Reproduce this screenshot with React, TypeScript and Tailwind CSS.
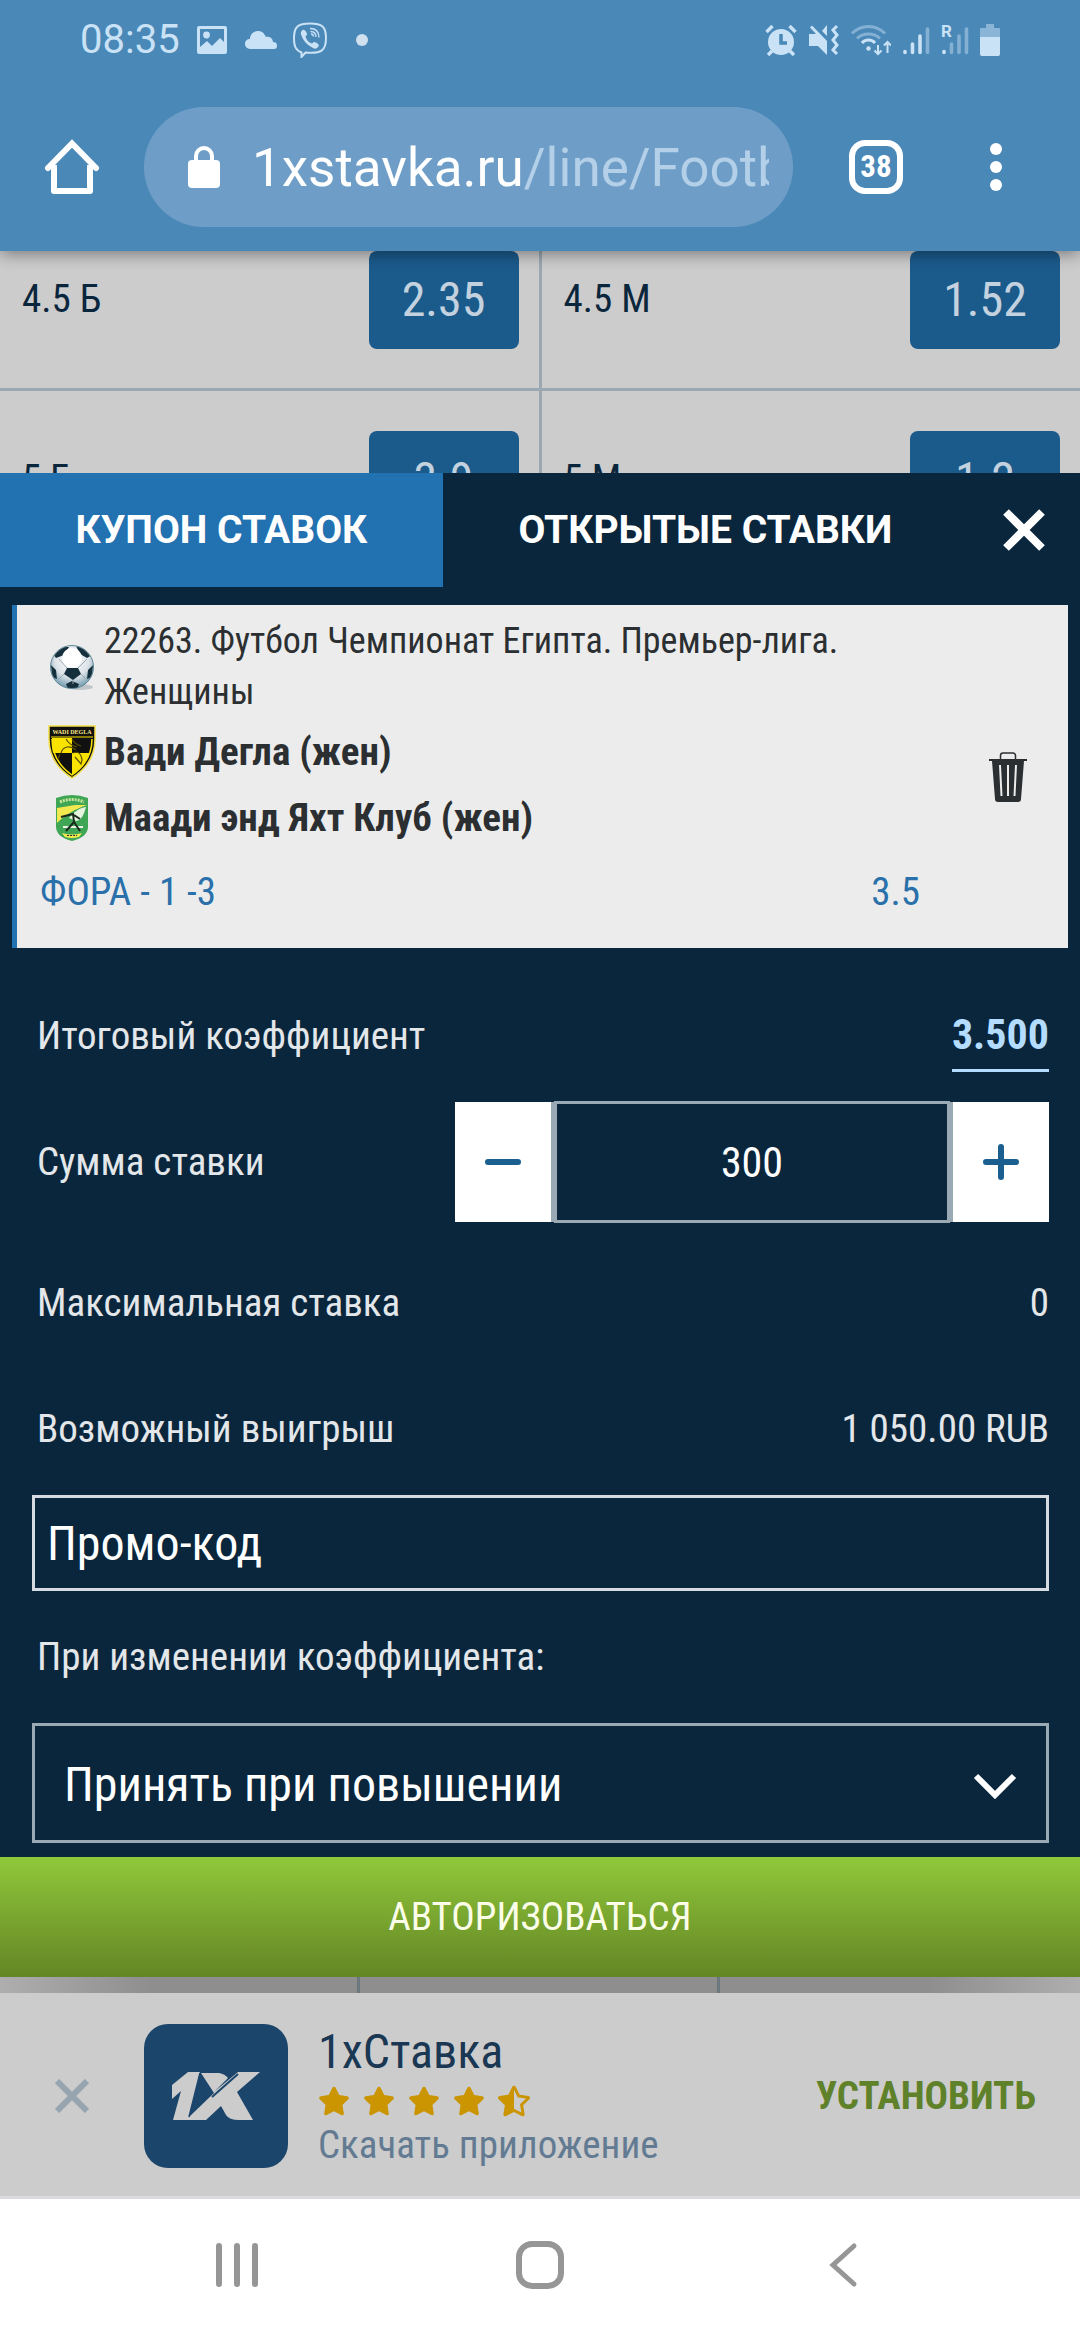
import { useState, type ReactNode } from 'react'
import { FaStar, FaStarHalfAlt } from 'react-icons/fa'

const ODDS = [
  { over: '4.5 Б', overOdd: '2.35', under: '4.5 М', underOdd: '1.52' },
  { over: '5 Б', overOdd: '3.9', under: '5 М', underOdd: '1.2' },
]

function StatusBar() {
  return (
    <div className="flex h-20 items-center px-20 text-[#c9e2f5]">
      <span className="mr-4 font-[Roboto] text-[40px] leading-[48px]">08:35</span>
      <svg className="mr-4 h-8 w-8" viewBox="0 0 32 32" fill="currentColor">
        <path
          fillRule="evenodd"
          d="M3 2h26a2 2 0 0 1 2 2v24a2 2 0 0 1-2 2H3a2 2 0 0 1-2-2V4a2 2 0 0 1 2-2Zm1 3v18l7-6 5 5 8-8 4 4V5Z"
        />
        <circle cx="10.5" cy="11" r="3.4" />
      </svg>
      <svg className="mr-[14px] h-8 w-[34px]" viewBox="0 0 34 32" fill="currentColor">
        <path d="M6 25a5 5 0 0 1-5-5c0-3 2-5 5-5 0-5 4-8 8-8 4 0 6 2 8 6 4-1 7 2 7 5 3 0 4 1.500 4 4 0 2-1 3-3 3Z" />
      </svg>
      <svg className="mr-7 h-9 w-9" viewBox="0 0 36 36" fill="none" stroke="currentColor" strokeWidth="2">
        <path d="M18 1.500c-12 0-16 3-16 14.500 0 8 1.500 12 7.500 14.500v4.500l4-4.500C29 32 34 29 34 16 34 4.500 30 1.500 18 1.500Z" />
        <path
          fill="currentColor"
          stroke="none"
          d="M10 8.500c1.500-1.500 3-.5 4.500 2 1 2 .5 2.500-1 4 1 3.500 3 6 6.500 7 1.500-1.500 2-2 4-1 3 1.500 3.500 3 2 4.500-1.500 2-3 2-5 1C15 23 11 18.500 9 12.500c-.5-1.500 0-3 1-4Z"
        />
        <path strokeWidth="1.300" d="M18 6.500c6 0 9 3.500 9 9M18.500 9.500c4 0 5.500 2 5.500 5.500M19 12c1.500 0 2.500 1 2.500 2.500" />
      </svg>
      <span className="h-3 w-3 rounded-full bg-[#d0e0ee]" />
      <div className="ml-auto flex items-center gap-[11px]">
        <svg className="h-8 w-8" viewBox="0 0 32 32" fill="currentColor">
          <circle cx="16" cy="18" r="13" />
          <path d="M7 27l-4 4M25 27l4 4M1.500 8l6-6M30.500 8l-6-6" stroke="currentColor" strokeWidth="3.500" />
          <path d="M16 10v9h6" fill="none" stroke="#4a88b8" strokeWidth="3.500" />
        </svg>
        <svg className="h-8 w-8" viewBox="0 0 32 32" fill="currentColor">
          <path d="M1 10h7L19 22v9l-9-9H1ZM19 1v11l-5-5ZM2 3.500 4 1.500 19 17v5Z" />
          <path d="M29 2l-4 4 4 5-4 5 4 5-4 5 4 4" fill="none" stroke="currentColor" strokeWidth="3" />
        </svg>
        <svg className="h-8 w-10" viewBox="0 0 40 32" fill="none" stroke="currentColor" strokeWidth="3">
          <path opacity=".45" d="M1 9.500C10 0 25 0 34 9.500M6 14.500c6-6 17-6 23 0" />
          <path d="M11 19c3-4 10-4 13 0" />
          <circle cx="17.500" cy="24.500" r="2.200" fill="currentColor" stroke="none" />
          <path strokeWidth="2" d="M27 21v9m-3.500-3.500L27 30l3.500-3.500M36.500 29v-11M33 21.500l3.500-3.500 3.500 3.500" />
        </svg>
        <svg className="h-8 w-7" viewBox="0 0 28 32" stroke="currentColor" strokeWidth="3.600" strokeLinecap="round">
          <path d="M3 27.500v1M10.500 20v8.500M18 12v16.500" />
          <path opacity=".45" d="M25.500 5v23.500" />
        </svg>
        <svg
          className="h-8 w-7 overflow-visible"
          viewBox="0 0 28 32"
          stroke="currentColor"
          strokeWidth="3.600"
          strokeLinecap="round"
        >
          <path d="M3 27.500v1" />
          <path opacity=".45" d="M10.500 20v8.500M18 12v16.500M25.500 5v23.500" />
          <text x="0" y="13" fontSize="17" fontWeight="700" fontFamily="Roboto" fill="currentColor" stroke="none">
            R
          </text>
        </svg>
        <svg className="h-8 w-5" viewBox="0 0 20 32" fill="currentColor">
          <path opacity=".5" d="M6 0h8v4h5a1 1 0 0 1 1 1v8H0V5a1 1 0 0 1 1-1h5Z" />
          <path d="M0 13h20v17a2 2 0 0 1-2 2H2a2 2 0 0 1-2-2Z" />
        </svg>
      </div>
    </div>
  )
}

function BrowserBar() {
  return (
    <header className="relative z-10 bg-[#4a88b8] pb-6 shadow-[0_2px_16px_rgba(0,0,0,0.45)]">
      <StatusBar />
      <div className="flex items-center pt-[27px] pr-[78px] pl-11 text-white">
        <button aria-label="Домой">
          <svg className="h-14 w-14" viewBox="0 0 56 56" fill="none" stroke="currentColor" strokeWidth="6">
            <path strokeLinecap="round" d="M4 29 28 4.500 52 29" />
            <path strokeLinejoin="round" d="M10 26v26h36V26" />
          </svg>
        </button>
        <div className="mr-14 ml-11 flex h-[120px] min-w-0 flex-1 items-center rounded-full bg-[#6e9ec7] pr-6 pl-11">
          <svg className="h-[42px] w-8 shrink-0" viewBox="0 0 32 42" fill="currentColor">
            <rect y="14" width="32" height="28" rx="4" />
            <path d="M8 16v-6a8 8 0 0 1 16 0v6" fill="none" stroke="currentColor" strokeWidth="4" />
          </svg>
          <span className="ml-8 overflow-hidden pt-[2px] font-[Roboto] text-[53px] leading-[64px] whitespace-nowrap">
            1xstavka.ru<span className="text-[#b3d0e8]">/line/Football</span>
          </span>
        </div>
        <button
          aria-label="Вкладки"
          className="h-[54px] w-[54px] rounded-2xl border-6 border-white text-[31px] leading-[42px] font-bold"
        >
          38
        </button>
        <button aria-label="Меню" className="ml-[87px] flex w-3 flex-col gap-[6px]">
          <span className="h-3 w-3 rounded-full bg-white" />
          <span className="h-3 w-3 rounded-full bg-white" />
          <span className="h-3 w-3 rounded-full bg-white" />
        </button>
      </div>
    </header>
  )
}

function OddCell({ label, odd }: { label: string; odd: string }) {
  return (
    <div className="flex h-[177px] items-center justify-between bg-[#cccccc] pr-5 pl-[22px]">
      <span className="text-[39px] text-[#0a263c]">{label}</span>
      <button className="h-[98px] w-[150px] rounded-lg bg-[#1b5b8c] text-[48px] text-[#c3d2de]">{odd}</button>
    </div>
  )
}

function OddsTable() {
  return (
    <div className="flex h-[222px] flex-col overflow-hidden">
      <div className="-mt-10 grid shrink-0 grid-cols-2 gap-[3px] bg-[#9ba8b2]">
        {ODDS.map((row) => [
          <OddCell key={row.over} label={row.over} odd={row.overOdd} />,
          <OddCell key={row.under} label={row.under} odd={row.underOdd} />,
        ])}
      </div>
    </div>
  )
}

function BallIcon() {
  return (
    <svg className="h-12 w-12" viewBox="0 0 48 48">
      <defs>
        <radialGradient id="ball" cx="50%" cy="35%" r="65%">
          <stop offset="0" stopColor="#ffffff" />
          <stop offset=".6" stopColor="#dde3e8" />
          <stop offset="1" stopColor="#6f99ad" />
        </radialGradient>
        <clipPath id="ball-clip">
          <circle cx="24" cy="24" r="21" />
        </clipPath>
      </defs>
      <ellipse cx="32" cy="44" rx="13" ry="3" fill="#bfc5c8" />
      <circle cx="24" cy="24" r="21.500" fill="url(#ball)" stroke="#5b8799" strokeWidth="1" />
      <g clipPath="url(#ball-clip)" fill="#15303c">
        <path d="M19 25h11l3 6-8 6-9-6Z" />
        <path d="M11 4h10l-5 8-8 3-3-4ZM28 3h10l6 9-5 3-7-4ZM3 22l5 5 1 9-5-2ZM45 22l-5 5-1 9 5-2ZM18 41l6-3 7 3-2 5H20Z" />
        <path d="m16 31-6 6m23-6 6 6M25 37v4M19 25l-8-9m19 9 9-9" fill="none" stroke="#9aa8b0" strokeWidth="1" />
      </g>
      <circle cx="24" cy="15" r="10" fill="#fff" />
    </svg>
  )
}

function WadiDeglaCrest() {
  return (
    <svg className="h-[54px] w-12" viewBox="0 0 48 54">
      <path d="M1 1h46v13c0 18-9 30-23 39C10 44 1 32 1 14Z" fill="#111" stroke="#f1e04a" strokeWidth="1.500" />
      <path d="M4 13h20v15H5C4 24 4 19 4 13Zm20 15h18c-3 9-9 15-18 22Z" fill="#fbe300" />
      <path d="M3 12h42" stroke="#fbe300" strokeWidth="1" />
      <path d="M44 14c0 16-7 27-20 36C11 41 4 30 4 14" fill="none" stroke="#fbe300" strokeWidth="1.500" />
      <path
        d="M13 28c2-7 9-8 15-3M18 14c3 5 6 7 11 8M24 14c2 4 5 6 9 7M25 28c5-2 8 0 9 7l-1 4-6-7M12 29l-2 5"
        fill="none"
        stroke="#5a5200"
        strokeWidth="1.200"
      />
      <text x="24" y="9" textAnchor="middle" fontSize="6" fontWeight="700" fontFamily="Liberation Serif" fill="#fbe98a">
        WADI DEGLA
      </text>
    </svg>
  )
}

function MaadiCrest() {
  return (
    <svg className="h-12 w-[34px]" viewBox="0 0 34 48">
      <path d="M1 4q16-6 32 0v29c0 7-7 12-16 14C8 45 1 40 1 33Z" fill="#3fa655" />
      <path d="M2 14l18-3h12C20 15 10 21 2 29Z" fill="#f3e84f" />
      <path d="M14 24C19 18 24 14 31 13c-2 7-4 13-10 14Z" fill="#e6f3df" />
      <path d="M5 8q12-5 24 0" fill="none" stroke="#c9e59a" strokeWidth="3" strokeDasharray="2 1" />
      <path d="M8 33h20" stroke="#e9f5e2" strokeWidth="2" />
      <path d="m6 23 12-3 1 8 6 9m-6-9-8 9M19 21l6 4" fill="none" stroke="#1b2a1d" strokeWidth="2" />
      <path d="M7 39q10 3 20 0l-3 4q-7 2-14 0Z" fill="#f3e84f" />
      <path d="M12 41.500h10" stroke="#333" strokeWidth="1.200" strokeDasharray="2 1" />
    </svg>
  )
}

function CouponLine({ icon, children }: { icon: ReactNode; children: ReactNode }) {
  return (
    <div className="flex items-center">
      <span className="flex w-16 shrink-0 justify-center">{icon}</span>
      <span>{children}</span>
    </div>
  )
}

function Coupon() {
  return (
    <section className="mx-3 mt-[18px] flex border-l-5 border-[#2271b1] bg-[#ececec] text-[#2b2f31]">
      <div className="flex-1 pt-[11px] pb-[14px] pl-[23px]">
        <div className="text-[36px] leading-[51px]">
          <CouponLine icon={<BallIcon />}>22263. Футбол Чемпионат Египта. Премьер-лига. Женщины</CouponLine>
        </div>
        <div className="pt-px text-[39px] leading-[66px] font-bold">
          <CouponLine icon={<WadiDeglaCrest />}>Вади Дегла (жен)</CouponLine>
          <CouponLine icon={<MaadiCrest />}>Маади энд Яхт Клуб (жен)</CouponLine>
        </div>
        <div className="flex justify-between pr-7 text-[39px] leading-[83px] text-[#2a70aa]">
          <span>ФОРА - 1 -3</span>
          <span>3.5</span>
        </div>
      </div>
      <button aria-label="Удалить" className="flex w-30 items-center justify-center">
        <svg className="h-[50px] w-[38px]" viewBox="0 0 38 50" fill="currentColor">
          <path d="M11.500 8V3.500a2.500 2.500 0 0 1 2.500-2.500h10a2.500 2.500 0 0 1 2.500 2.500V8" fill="none" stroke="currentColor" strokeWidth="1.500" />
          <path d="M0 7h38v2h-3l-3 38q0 3-3 3H9q-3 0-3-3L3 9H0Z" />
          <path d="M11 13l1.500 31M19 13v31M27 13l-1.500 31" stroke="#ececec" strokeWidth="2" />
        </svg>
      </button>
    </section>
  )
}

function SlipRow({ label, children }: { label: ReactNode; children: ReactNode }) {
  return (
    <div className="flex h-[126px] items-center justify-between pl-[5px]">
      {label}
      {children}
    </div>
  )
}

function BetForm() {
  const [stake, setStake] = useState('300')

  const step = (delta: number) => setStake((s) => String(Math.max(0, Number(s) + delta)))

  return (
    <form className="pt-[25px] pr-[31px] pb-[14px] pl-8 text-[39px] text-[#e4e7ea]">
      <SlipRow label={<span>Итоговый коэффициент</span>}>
        <span className="border-b-3 border-[#b3dcff] text-[42px] leading-[68px] font-bold text-[#b3dcff]">3.500</span>
      </SlipRow>
      <SlipRow label={<label htmlFor="stake">Сумма ставки</label>}>
        <div className="flex w-[594px] items-center">
          <button
            type="button"
            aria-label="Меньше"
            onClick={() => step(-50)}
            className="flex h-30 w-[99px] items-center justify-center border-r-3 border-[#9aaab5] bg-white"
          >
            <span className="h-[6px] w-9 rounded-full bg-[#1b5f90]" />
          </button>
          <input
            id="stake"
            value={stake}
            onChange={(e) => setStake(e.target.value)}
            className="h-[122px] min-w-0 flex-1 border-3 border-[#9aaab5] bg-transparent text-center text-[42px] text-white outline-none"
          />
          <button
            type="button"
            aria-label="Больше"
            onClick={() => step(50)}
            className="flex h-30 w-[99px] items-center justify-center border-l-3 border-[#9aaab5] bg-white"
          >
            <svg className="h-9 w-9" viewBox="0 0 36 36" stroke="#1b5f90" strokeWidth="6" strokeLinecap="round">
              <path d="M3 18h30M18 3v30" />
            </svg>
          </button>
        </div>
      </SlipRow>
      <div className="pt-[15px]">
        <SlipRow label={<span>Максимальная ставка</span>}>
          <span>0</span>
        </SlipRow>
        <SlipRow label={<span>Возможный выигрыш</span>}>
          <span>1 050.00 RUB</span>
        </SlipRow>
      </div>
      <input
        aria-label="Промо-код"
        placeholder="Промо-код"
        className="mt-[3px] block h-24 w-full border-3 border-[#d5dbe0] bg-transparent px-3 text-[48px] text-white outline-none placeholder:text-white"
      />
      <label htmlFor="odds-change" className="block pl-[5px] leading-[132px]">
        При изменении коэффициента:
      </label>
      <div className="relative">
        <select
          id="odds-change"
          className="block h-30 w-full appearance-none border-3 border-[#9aaab5] bg-transparent px-[29px] pt-1 text-[48px] text-white outline-none"
        >
          <option>Принять при повышении</option>
          <option>Принимать любые изменения</option>
        </select>
        <svg
          className="pointer-events-none absolute top-[50px] right-8 h-[26px] w-11"
          viewBox="0 0 44 26"
          fill="none"
          stroke="#fff"
          strokeWidth="6"
        >
          <path d="m3 3 19 19L41 3" />
        </svg>
      </div>
    </form>
  )
}

function BetSlip() {
  return (
    <main className="bg-[#0a263c]">
      <div className="flex h-[114px] text-white">
        <button className="w-[41%] bg-[#2271b1] font-[Roboto] text-[39px] font-bold">КУПОН СТАВОК</button>
        <button className="flex-1 font-[Roboto] text-[39px] font-bold">ОТКРЫТЫЕ СТАВКИ</button>
        <button aria-label="Закрыть" className="flex w-28 items-center pl-[35px]">
          <svg className="h-[42px] w-[42px]" viewBox="0 0 42 42" stroke="#fff" strokeWidth="8">
            <path d="m3 3 36 36M39 3 3 39" />
          </svg>
        </button>
      </div>
      <Coupon />
      <BetForm />
      <button className="h-30 w-full bg-linear-to-b from-[#90c83a] to-[#648625] text-[39px] text-[#fbfde8]">
        АВТОРИЗОВАТЬСЯ
      </button>
    </main>
  )
}

function InstallBanner() {
  return (
    <aside className="flex border-b-3 border-[#dadbdf] bg-[#cccccc] pt-[31px] pb-7 pl-[55px]">
      <button aria-label="Скрыть">
        <svg className="h-[34px] w-[34px]" viewBox="0 0 34 34" stroke="#97a5b0" strokeWidth="6">
          <path d="m2 2 30 30M32 2 2 32" />
        </svg>
      </button>
      <div className="mr-[30px] ml-[55px] flex h-36 w-36 items-center justify-center rounded-3xl bg-[#1c456b]">
        <svg className="h-12 w-[88px]" viewBox="0 0 88 48" fill="#cccccc">
          <path d="M16 0h12L17 45 42 21 29 1h18q6 1 9 5L42 20 66 0h22L65 20l16 28H67q-10 0-13-5l-5-9-15 14H1L9 19l-9 8V13Z" />
          <path d="M28 1 17 45" stroke="#1c456b" strokeWidth="1.500" />
          <path d="M66 2 40 25" stroke="#1c456b" strokeWidth="2" />
        </svg>
      </div>
      <div className="flex flex-1 flex-col">
        <span className="text-[48px] leading-[56px] text-[#1a3753]">1хСтавка</span>
        <div className="flex h-[42px] items-center gap-[13px] text-[32px] text-[#ca9500]">
          <FaStar />
          <FaStar />
          <FaStar />
          <FaStar />
          <FaStarHalfAlt />
        </div>
        <span className="text-[39px] leading-[46px] text-[#637b92]">Скачать приложение</span>
      </div>
      <button className="mr-11 text-[39px] font-bold text-[#5f812a]">УСТАНОВИТЬ</button>
    </aside>
  )
}

function NavBar() {
  return (
    <nav className="flex h-[141px] justify-around bg-white px-[86px] pb-[9px] text-[#969696]">
      <button aria-label="Недавние">
        <svg className="h-12 w-12" viewBox="0 0 48 48" stroke="currentColor" strokeWidth="6" strokeLinecap="round">
          <path d="M6 5v38M24 5v38M42 5v38" />
        </svg>
      </button>
      <button aria-label="Главный экран">
        <svg className="h-12 w-12" viewBox="0 0 48 48" fill="none" stroke="currentColor" strokeWidth="6">
          <rect x="3" y="3" width="42" height="42" rx="13" />
        </svg>
      </button>
      <button aria-label="Назад">
        <svg className="h-12 w-12" viewBox="0 0 48 48" fill="none" stroke="currentColor" strokeWidth="5" strokeLinecap="round">
          <path d="M35 5 14 24l21 19" />
        </svg>
      </button>
    </nav>
  )
}

export default function App() {
  return (
    <div className="min-h-screen w-full bg-white font-['Roboto_Condensed',Roboto,sans-serif]">
      <BrowserBar />
      <OddsTable />
      <BetSlip />
      {/* page edge left visible under the slip */}
      <div className="grid h-4 grid-cols-3 divide-x-3 divide-[#6c787d] bg-[linear-gradient(to_right,#aeaeae,#8e8e8e_14%,#8e8e8e_86%,#aeaeae)]">
        <span />
        <span />
        <span />
      </div>
      <InstallBanner />
      <NavBar />
    </div>
  )
}
